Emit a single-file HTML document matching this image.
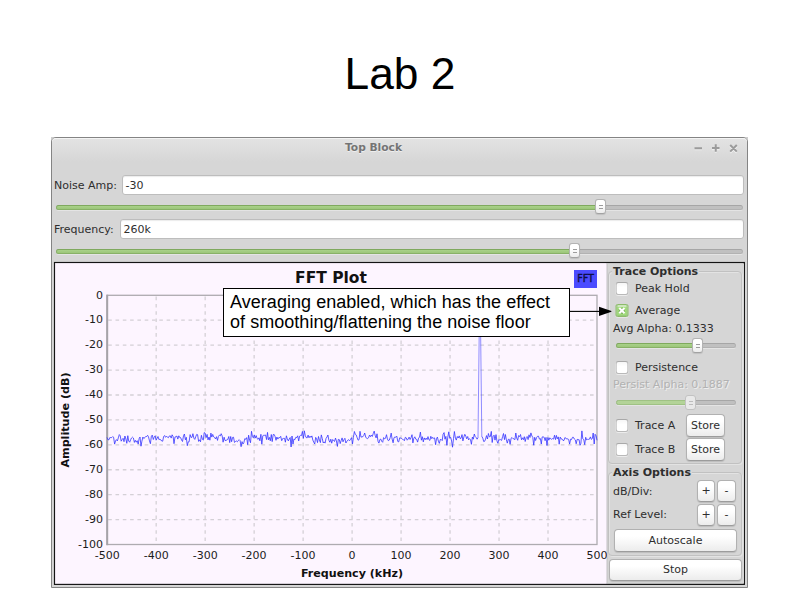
<!DOCTYPE html>
<html>
<head>
<meta charset="utf-8">
<title>Lab 2</title>
<style>
html,body{margin:0;padding:0;}
body{width:800px;height:600px;background:#fff;position:relative;overflow:hidden;font-family:"DejaVu Sans","Liberation Sans",sans-serif;font-size:11px;color:#2e2e2e;}
.abs{position:absolute;}
#title{position:absolute;left:0;width:800px;top:49px;text-align:center;font-family:"Liberation Sans",sans-serif;font-size:44.3px;line-height:50px;color:#000;}
#corner{position:absolute;left:51px;top:137px;width:697px;height:8px;background:#cdcdcd;}
#win{position:absolute;left:51px;top:137px;width:697px;height:451px;box-sizing:border-box;background:#d6d6d6;border:1px solid #848484;border-radius:5px 5px 0 0;}
#tbar{position:absolute;left:52px;top:138px;width:695px;height:24px;border-radius:4px 4px 0 0;background:linear-gradient(#e3e3e3,#d6d6d6);box-shadow:inset 0 1px 0 #f4f4f4;}
#wtitle{position:absolute;left:52px;width:643px;top:141px;text-align:center;font-weight:bold;font-size:10.67px;line-height:14px;color:#747474;text-shadow:0 1px 0 rgba(255,255,255,0.55);}
.lbl{position:absolute;line-height:14px;white-space:nowrap;}
.entry{position:absolute;box-sizing:border-box;background:#fff;border:1px solid #bdbdbd;border-radius:3px;height:20px;line-height:20px;padding-left:2.6px;box-shadow:inset 0 1px 1px rgba(0,0,0,0.08);}
.track{position:absolute;height:5px;box-sizing:border-box;border-radius:3px;background:#c0c0c0;border:1px solid #b2b2b2;border-top-color:#a6a6a6;box-shadow:0 1px 0 rgba(255,255,255,0.35);}
.fill{position:absolute;height:5px;box-sizing:border-box;border-radius:3px;background:linear-gradient(#a9d189,#9cc67a);border:1px solid #88b167;border-top-color:#7fa95e;}
.knob{position:absolute;box-sizing:border-box;width:11px;height:15px;border-radius:3px;background:linear-gradient(#ffffff 35%,#ececec);border:1px solid #b3b3b3;border-bottom-color:#a2a2a2;box-shadow:0 1px 1px rgba(0,0,0,0.10);}
.knob:before{content:"";position:absolute;left:3px;top:5px;width:4px;height:1px;background:#9c9c9c;box-shadow:0 3px 0 #9c9c9c;}
.knob.off{background:#e9e9e9;border-color:#c2c2c2;box-shadow:none;}
.knob.off:before{background:#bdbdbd;box-shadow:0 3px 0 #bdbdbd;}
.fill.off{background:#b3d398;border-color:#9fc284;}
#plot{position:absolute;left:55px;top:263px;width:551px;height:321px;background:#fdf5ff;border-right:1px solid #e0dbe2;}
.yl{position:absolute;left:60px;width:43px;text-align:right;font-size:11px;line-height:14px;color:#1c1c1c;}
.xl{position:absolute;top:549px;width:40px;text-align:center;font-size:11px;line-height:14px;color:#1c1c1c;}
#ptitle{position:absolute;left:231px;width:200px;top:269px;text-align:center;font-weight:bold;font-size:15.5px;line-height:18px;color:#111;}
#xt{position:absolute;left:252px;width:200px;top:567px;text-align:center;font-weight:bold;font-size:11.1px;line-height:14px;color:#111;}
#yt{position:absolute;left:-34px;width:200px;top:413px;text-align:center;font-weight:bold;font-size:11.15px;line-height:14px;color:#111;transform:rotate(-90deg);}
#leg{position:absolute;left:574px;top:270px;width:23px;height:17.5px;background:#4b4bff;color:#0e0e48;font-size:9.6px;line-height:17px;text-align:center;-webkit-text-stroke:0.4px #0e0e48;}
#ann{position:absolute;left:223px;top:288px;width:347px;height:48.5px;box-sizing:border-box;background:#fff;border:1px solid #000;font-family:"Liberation Sans",sans-serif;font-size:18px;line-height:20px;color:#000;padding:3px 0 0 6px;white-space:nowrap;letter-spacing:0.04px;}
.frame{position:absolute;box-sizing:border-box;border:1px solid #c1c1c1;border-radius:4px;box-shadow:inset 1px 1px 0 #e3e3e3,1px 1px 0 #e3e3e3;}
.ftitle{position:absolute;font-weight:bold;line-height:14px;background:#d6d6d6;padding:0 1px;color:#2e2e2e;font-size:11px;}
.cb{position:absolute;box-sizing:border-box;width:13px;height:13px;border-radius:3px;background:linear-gradient(#f6f6f6,#ffffff 40%);border:1px solid #b9b9b9;border-top-color:#a9a9a9;box-shadow:0 1px 0 rgba(255,255,255,0.55);transform:translateX(-0.5px);}
.cb.on{background:linear-gradient(#cde7bd 0,#cde7bd 1.5px,#a7e280 2.5px,#9fdc78 100%);border:1px solid #8cbb6a;box-shadow:inset 1px 0 0 #9cca80,inset -1px 0 0 #9cca80,inset 0 -1px 0 #98c97b,0 1px 0 rgba(255,255,255,0.4);border-radius:2px;}
.btn{position:absolute;box-sizing:border-box;border:1px solid #b1b1b1;border-bottom-color:#9c9c9c;border-radius:4px;background:linear-gradient(#ffffff 30%,#ececec);text-align:center;box-shadow:0 1px 1px rgba(0,0,0,0.12);color:#2e2e2e;}
.dis{color:#b2b2b2;text-shadow:1px 1px 0 rgba(255,255,255,0.6);}
</style>
</head>
<body>
<div id="title">Lab 2</div>

<div id="corner"></div>
<div id="win"></div>
<div id="tbar"></div>
<div id="wtitle">Top Block</div>
<svg class="abs" style="left:690px;top:140px" width="52" height="16" viewBox="690 140 52 16">
<g stroke="#f2f2f2" stroke-width="2" fill="none" opacity="0.8"><path d="M694.5 149.2H702 M712 149.2H719.5 M715.75 145.2V152.7 M730.2 146.2L736.8 152.8 M736.8 146.2L730.2 152.8"/></g>
<g stroke="#9b9b9b" stroke-width="2" fill="none"><path d="M694.5 148.2H702 M712 148H719.5 M715.75 144.2V151.8 M730.2 145L736.8 151.6 M736.8 145L730.2 151.6"/></g>
</svg>

<div class="lbl" style="left:54px;top:179px">Noise Amp:</div>
<div class="entry" style="left:122px;top:175px;width:622px">-30</div>
<div class="track" style="left:56px;top:205px;width:687px"></div>
<div class="fill" style="left:56px;top:205px;width:545px"></div>
<div class="knob" style="left:595px;top:199px"></div>

<div class="lbl" style="left:54px;top:223px">Frequency:</div>
<div class="entry" style="left:120px;top:219px;width:624px">260k</div>
<div class="track" style="left:56px;top:249px;width:687px"></div>
<div class="fill" style="left:56px;top:249px;width:518px"></div>
<div class="knob" style="left:569px;top:243px"></div>

<div id="plot"></div>
<svg class="abs" style="left:0;top:0" width="800" height="600" viewBox="0 0 800 600">
<g stroke="#d4d0d6" stroke-width="1.3" stroke-dasharray="3.6,3.7" fill="none">
<line x1="108.2" y1="320.22" x2="596.4" y2="320.22"/>
<line x1="108.2" y1="345.14" x2="596.4" y2="345.14"/>
<line x1="108.2" y1="370.06" x2="596.4" y2="370.06"/>
<line x1="108.2" y1="394.98" x2="596.4" y2="394.98"/>
<line x1="108.2" y1="419.90" x2="596.4" y2="419.90"/>
<line x1="108.2" y1="444.82" x2="596.4" y2="444.82"/>
<line x1="108.2" y1="469.74" x2="596.4" y2="469.74"/>
<line x1="108.2" y1="494.66" x2="596.4" y2="494.66"/>
<line x1="108.2" y1="519.58" x2="596.4" y2="519.58"/>
<line x1="156.18" y1="296.6" x2="156.18" y2="544.0"/>
<line x1="205.16" y1="296.6" x2="205.16" y2="544.0"/>
<line x1="254.14" y1="296.6" x2="254.14" y2="544.0"/>
<line x1="303.12" y1="296.6" x2="303.12" y2="544.0"/>
<line x1="352.10" y1="296.6" x2="352.10" y2="544.0"/>
<line x1="401.08" y1="296.6" x2="401.08" y2="544.0"/>
<line x1="450.06" y1="296.6" x2="450.06" y2="544.0"/>
<line x1="499.04" y1="296.6" x2="499.04" y2="544.0"/>
<line x1="548.02" y1="296.6" x2="548.02" y2="544.0"/>
</g>
<rect x="107.2" y="295.3" width="489.8" height="249.2" fill="none" stroke="#aeabb0" stroke-width="1.3"/>
<line x1="107.2" y1="294.7" x2="107.2" y2="545.2" stroke="#a6a3a8" stroke-width="2"/>
<rect x="54.5" y="262.5" width="689.9" height="321.9" fill="none" stroke="#141414" stroke-width="1.15"/>
<path d="M107.0,437.4 L107.9,439.7 L108.9,439.8 L109.8,437.6 L110.8,437.6 L111.7,437.6 L112.7,436.6 L113.6,437.3 L114.6,444.1 L115.5,441.0 L116.4,439.6 L117.4,440.9 L118.3,437.9 L119.3,434.6 L120.2,435.7 L121.2,441.2 L122.1,439.6 L123.1,438.3 L124.0,441.7 L124.9,436.0 L125.9,439.0 L126.8,443.3 L127.8,435.7 L128.7,441.0 L129.7,442.2 L130.6,439.8 L131.5,438.0 L132.5,437.2 L133.4,438.0 L134.4,442.4 L135.3,440.3 L136.3,442.2 L137.2,440.7 L138.2,444.1 L139.1,438.6 L140.0,437.0 L141.0,446.2 L141.9,441.2 L142.9,437.0 L143.8,438.6 L144.8,437.7 L145.7,436.5 L146.7,436.5 L147.6,435.3 L148.5,436.9 L149.5,440.9 L150.4,443.7 L151.4,436.1 L152.3,435.1 L153.3,439.5 L154.2,437.2 L155.2,435.8 L156.1,440.2 L157.0,438.5 L158.0,436.5 L158.9,439.5 L159.9,439.3 L160.8,439.8 L161.8,441.1 L162.7,441.2 L163.6,436.6 L164.6,435.5 L165.5,437.3 L166.5,436.2 L167.4,437.2 L168.4,437.7 L169.3,436.0 L170.3,435.8 L171.2,438.1 L172.1,434.8 L173.1,436.5 L174.0,443.7 L175.0,436.9 L175.9,436.8 L176.9,436.0 L177.8,439.1 L178.8,435.8 L179.7,437.5 L180.6,437.6 L181.6,440.1 L182.5,441.5 L183.5,435.8 L184.4,434.0 L185.4,439.8 L186.3,437.3 L187.3,445.7 L188.2,441.9 L189.1,441.8 L190.1,434.6 L191.0,437.4 L192.0,437.3 L192.9,433.7 L193.9,438.2 L194.8,439.4 L195.7,436.8 L196.7,434.4 L197.6,434.7 L198.6,441.4 L199.5,439.8 L200.5,441.8 L201.4,435.3 L202.4,439.3 L203.3,440.1 L204.2,432.6 L205.2,433.2 L206.1,437.6 L207.1,434.4 L208.0,439.9 L209.0,437.0 L209.9,440.2 L210.9,433.1 L211.8,437.1 L212.7,434.4 L213.7,436.9 L214.6,437.5 L215.6,439.0 L216.5,436.7 L217.5,440.4 L218.4,436.5 L219.4,435.1 L220.3,435.9 L221.2,433.7 L222.2,436.0 L223.1,442.2 L224.1,437.2 L225.0,440.5 L226.0,440.5 L226.9,439.9 L227.8,439.4 L228.8,436.5 L229.7,442.6 L230.7,436.5 L231.6,441.7 L232.6,437.4 L233.5,437.2 L234.5,442.4 L235.4,441.6 L236.3,440.9 L237.3,441.8 L238.2,440.6 L239.2,439.7 L240.1,440.6 L241.1,446.7 L242.0,441.6 L243.0,444.0 L243.9,442.5 L244.8,438.6 L245.8,439.3 L246.7,437.6 L247.7,444.7 L248.6,435.2 L249.6,440.1 L250.5,442.7 L251.5,431.3 L252.4,436.4 L253.3,437.8 L254.3,434.9 L255.2,438.1 L256.2,435.6 L257.1,438.5 L258.1,439.4 L259.0,437.8 L259.9,440.8 L260.9,434.3 L261.8,444.2 L262.8,435.8 L263.7,435.3 L264.7,435.3 L265.6,435.0 L266.6,439.6 L267.5,432.4 L268.4,439.8 L269.4,437.4 L270.3,440.8 L271.3,434.5 L272.2,441.6 L273.2,434.6 L274.1,434.4 L275.1,436.5 L276.0,440.3 L276.9,437.0 L277.9,439.1 L278.8,437.5 L279.8,437.7 L280.7,436.3 L281.7,440.7 L282.6,438.7 L283.6,438.4 L284.5,438.3 L285.4,442.2 L286.4,435.8 L287.3,438.9 L288.3,440.9 L289.2,439.0 L290.2,437.5 L291.1,447.0 L292.0,436.0 L293.0,444.0 L293.9,439.1 L294.9,439.6 L295.8,437.3 L296.8,437.6 L297.7,435.8 L298.7,440.9 L299.6,436.1 L300.5,435.4 L301.5,435.6 L302.4,431.4 L303.4,438.3 L304.3,430.8 L305.3,435.7 L306.2,437.6 L307.2,437.8 L308.1,435.1 L309.0,437.8 L310.0,436.1 L310.9,437.4 L311.9,435.9 L312.8,440.0 L313.8,442.3 L314.7,444.0 L315.7,437.4 L316.6,438.8 L317.5,442.6 L318.5,436.5 L319.4,439.9 L320.4,442.6 L321.3,434.9 L322.3,438.6 L323.2,442.9 L324.1,441.9 L325.1,443.1 L326.0,438.5 L327.0,437.0 L327.9,435.0 L328.9,440.2 L329.8,442.2 L330.8,439.2 L331.7,443.2 L332.6,439.6 L333.6,440.3 L334.5,441.5 L335.5,438.1 L336.4,440.9 L337.4,446.4 L338.3,439.4 L339.3,439.6 L340.2,443.6 L341.1,440.7 L342.1,437.9 L343.0,441.8 L344.0,439.6 L344.9,438.3 L345.9,443.0 L346.8,441.4 L347.8,440.2 L348.7,439.7 L349.6,440.7 L350.6,439.3 L351.5,437.7 L352.5,443.9 L353.4,437.3 L354.4,431.5 L355.3,434.3 L356.2,434.9 L357.2,437.8 L358.1,440.2 L359.1,439.6 L360.0,431.3 L361.0,437.2 L361.9,436.8 L362.9,436.7 L363.8,435.4 L364.7,433.0 L365.7,437.0 L366.6,438.3 L367.6,438.6 L368.5,437.8 L369.5,435.1 L370.4,436.7 L371.4,435.0 L372.3,436.5 L373.2,433.7 L374.2,431.1 L375.1,435.2 L376.1,437.9 L377.0,433.8 L378.0,441.3 L378.9,443.1 L379.9,439.5 L380.8,439.1 L381.7,441.3 L382.7,442.3 L383.6,437.6 L384.6,438.9 L385.5,438.3 L386.5,434.7 L387.4,438.9 L388.3,440.7 L389.3,440.1 L390.2,437.6 L391.2,433.1 L392.1,439.0 L393.1,442.8 L394.0,437.6 L395.0,437.0 L395.9,437.2 L396.8,436.2 L397.8,441.5 L398.7,441.9 L399.7,437.8 L400.6,438.0 L401.6,438.5 L402.5,439.3 L403.5,439.7 L404.4,440.7 L405.3,437.3 L406.3,437.9 L407.2,440.2 L408.2,439.0 L409.1,437.1 L410.1,439.5 L411.0,437.7 L412.0,434.7 L412.9,442.9 L413.8,438.3 L414.8,436.8 L415.7,439.1 L416.7,439.4 L417.6,442.1 L418.6,438.1 L419.5,437.1 L420.4,432.1 L421.4,440.2 L422.3,436.7 L423.3,441.9 L424.2,437.9 L425.2,439.7 L426.1,438.1 L427.1,439.6 L428.0,436.6 L428.9,439.7 L429.9,440.4 L430.8,436.3 L431.8,438.7 L432.7,437.3 L433.7,438.6 L434.6,437.9 L435.6,444.7 L436.5,438.6 L437.4,437.1 L438.4,441.2 L439.3,443.4 L440.3,439.5 L441.2,439.5 L442.2,440.6 L443.1,434.2 L444.1,432.6 L445.0,439.2 L445.9,436.4 L446.9,445.3 L447.8,437.1 L448.8,431.8 L449.7,438.1 L450.7,437.4 L451.6,441.0 L452.5,447.2 L453.5,438.6 L454.4,431.5 L455.4,438.1 L456.3,440.1 L457.3,436.5 L458.2,438.0 L459.2,435.9 L460.1,438.5 L461.0,438.3 L462.0,434.6 L462.9,440.9 L463.9,436.9 L464.8,434.3 L465.8,436.1 L466.7,438.8 L467.7,436.5 L468.6,439.9 L469.5,438.7 L470.5,439.6 L471.4,444.3 L472.4,437.0 L473.3,439.2 L474.3,434.0 L475.2,436.5 L476.2,437.6 L477.1,439.2 L478.0,437.5 M481.8,436.3 L482.8,438.2 L483.7,441.5 L484.6,441.3 L485.6,439.1 L486.5,435.6 L487.5,439.0 L488.4,433.5 L489.4,436.9 L490.3,436.6 L491.3,431.4 L492.2,442.5 L493.1,436.2 L494.1,435.2 L495.0,440.1 L496.0,434.6 L496.9,440.8 L497.9,443.3 L498.8,439.4 L499.8,440.0 L500.7,439.6 L501.6,440.4 L502.6,436.6 L503.5,433.5 L504.5,439.6 L505.4,434.5 L506.4,439.9 L507.3,443.1 L508.3,439.3 L509.2,439.2 L510.1,444.3 L511.1,438.3 L512.0,437.5 L513.0,438.7 L513.9,438.8 L514.9,439.7 L515.8,433.0 L516.7,438.0 L517.7,440.3 L518.6,435.6 L519.6,436.6 L520.5,434.5 L521.5,439.8 L522.4,437.8 L523.4,439.7 L524.3,436.7 L525.2,441.5 L526.2,437.6 L527.1,436.5 L528.1,439.6 L529.0,434.8 L530.0,437.5 L530.9,432.9 L531.9,436.0 L532.8,437.3 L533.7,445.2 L534.7,437.3 L535.6,440.5 L536.6,437.5 L537.5,436.3 L538.5,436.2 L539.4,439.1 L540.4,438.6 L541.3,444.0 L542.2,436.9 L543.2,436.9 L544.1,437.2 L545.1,440.7 L546.0,437.4 L547.0,445.5 L547.9,437.5 L548.8,440.2 L549.8,437.8 L550.7,438.8 L551.7,439.3 L552.6,438.6 L553.6,439.1 L554.5,435.2 L555.5,439.6 L556.4,435.4 L557.3,438.8 L558.3,436.9 L559.2,444.2 L560.2,437.1 L561.1,438.8 L562.1,439.1 L563.0,440.5 L564.0,440.4 L564.9,437.6 L565.8,438.0 L566.8,439.2 L567.7,438.8 L568.7,439.5 L569.6,444.1 L570.6,439.2 L571.5,439.6 L572.5,437.3 L573.4,437.3 L574.3,439.0 L575.3,439.9 L576.2,443.8 L577.2,439.3 L578.1,439.7 L579.1,439.7 L580.0,445.3 L580.9,443.3 L581.9,430.9 L582.8,438.8 L583.8,439.7 L584.7,444.7 L585.7,437.3 L586.6,439.9 L587.6,439.3 L588.5,439.4 L589.4,439.2 L590.4,436.9 L591.3,439.4 L592.3,438.6 L593.2,433.0 L594.2,444.0 L595.1,434.3 L596.1,435.8 L597.0,440.3" fill="none" stroke="#3434ff" stroke-width="0.8" stroke-linejoin="round"/>
<path d="M478.0,437.5 L479.45,312.4 L480.4,312.4 L481.8,436.3" fill="none" stroke="#4444ff" stroke-width="0.6" stroke-linejoin="round"/>
</svg>
<div class="yl" style="top:288.5px">0</div>
<div class="yl" style="top:313.4px">-10</div>
<div class="yl" style="top:338.3px">-20</div>
<div class="yl" style="top:363.3px">-30</div>
<div class="yl" style="top:388.2px">-40</div>
<div class="yl" style="top:413.1px">-50</div>
<div class="yl" style="top:438.0px">-60</div>
<div class="yl" style="top:462.9px">-70</div>
<div class="yl" style="top:487.9px">-80</div>
<div class="yl" style="top:512.8px">-90</div>
<div class="yl" style="top:537.7px">-100</div>
<div class="xl" style="left:87.2px">-500</div>
<div class="xl" style="left:136.2px">-400</div>
<div class="xl" style="left:185.2px">-300</div>
<div class="xl" style="left:234.1px">-200</div>
<div class="xl" style="left:283.1px">-100</div>
<div class="xl" style="left:332.1px">0</div>
<div class="xl" style="left:381.1px">100</div>
<div class="xl" style="left:430.1px">200</div>
<div class="xl" style="left:479.0px">300</div>
<div class="xl" style="left:528.0px">400</div>
<div class="xl" style="left:577.0px">500</div>
<div class="abs" style="left:607px;top:264px;width:137px;height:319px;background:#d6d6d6;border-left:1px solid #cbcbcb;box-sizing:border-box"></div>
<div id="ptitle">FFT Plot</div>
<div id="xt">Frequency (kHz)</div>
<div id="yt">Amplitude (dB)</div>
<div id="leg">FFT</div>

<div id="ann">Averaging enabled, which has the effect<br>of smoothing/flattening the noise floor</div>

<!-- right panel -->
<div class="frame" style="left:608px;top:271px;width:134px;height:193px"></div>
<div class="ftitle" style="left:612px;top:265px">Trace Options</div>
<div class="cb" style="left:616px;top:282px"></div>
<div class="lbl" style="left:635px;top:282px">Peak Hold</div>
<div class="cb on" style="left:616px;top:304px"></div>
<svg class="abs" style="left:614px;top:302px" width="17" height="17" viewBox="614 302 17 17"><path d="M619.6 308.4 L624.2 313 M624.2 308.4 L619.6 313" stroke="#6c9a50" stroke-opacity="0.75" stroke-width="3.6" stroke-linecap="butt"/><path d="M619.3 308.1 L624.5 313.3 M624.5 308.1 L619.3 313.3" stroke="#fff" stroke-width="2.1" stroke-linecap="butt"/></svg>
<div class="lbl" style="left:635px;top:304px">Average</div>
<div class="lbl" style="left:613px;top:322px">Avg Alpha: 0.1333</div>
<div class="track" style="left:616px;top:343px;width:120px"></div>
<div class="fill" style="left:616px;top:343px;width:82px"></div>
<div class="knob" style="left:692px;top:338px"></div>
<div class="cb" style="left:616px;top:361px"></div>
<div class="lbl" style="left:635px;top:361px">Persistence</div>
<div class="lbl dis" style="left:613px;top:378px">Persist Alpha: 0.1887</div>
<div class="track" style="left:616px;top:400px;width:120px"></div>
<div class="fill off" style="left:616px;top:400px;width:73px"></div>
<div class="knob off" style="left:685px;top:395px"></div>
<div class="cb" style="left:616px;top:419px"></div>
<div class="lbl" style="left:635px;top:419px">Trace A</div>
<div class="btn" style="left:686px;top:414px;width:39px;height:23px;line-height:21px">Store</div>
<div class="cb" style="left:616px;top:443px"></div>
<div class="lbl" style="left:635px;top:443px">Trace B</div>
<div class="btn" style="left:686px;top:438px;width:39px;height:23px;line-height:21px">Store</div>

<div class="frame" style="left:608px;top:472px;width:134px;height:84px"></div>
<div class="ftitle" style="left:612px;top:466px">Axis Options</div>
<div class="lbl" style="left:613px;top:485px">dB/Div:</div>
<div class="btn" style="left:697px;top:480px;width:18px;height:22px;line-height:20px">+</div>
<div class="btn" style="left:717px;top:480px;width:19px;height:22px;line-height:20px">-</div>
<div class="lbl" style="left:613px;top:508px">Ref Level:</div>
<div class="btn" style="left:697px;top:504px;width:18px;height:22px;line-height:20px">+</div>
<div class="btn" style="left:717px;top:504px;width:19px;height:22px;line-height:20px">-</div>
<div class="btn" style="left:614px;top:529px;width:123px;height:23px;line-height:21px">Autoscale</div>
<div class="btn" style="left:609px;top:559px;width:133px;height:22px;line-height:20px">Stop</div>
<svg class="abs" style="left:560px;top:300px" width="60" height="22" viewBox="560 300 60 22">
<line x1="570" y1="311.4" x2="601" y2="311.4" stroke="#000" stroke-width="1.1"/>
<path d="M599 306.8 L611.4 311.1 L611.4 311.7 L599 316 Z" fill="#000"/>
</svg>
</body>
</html>
